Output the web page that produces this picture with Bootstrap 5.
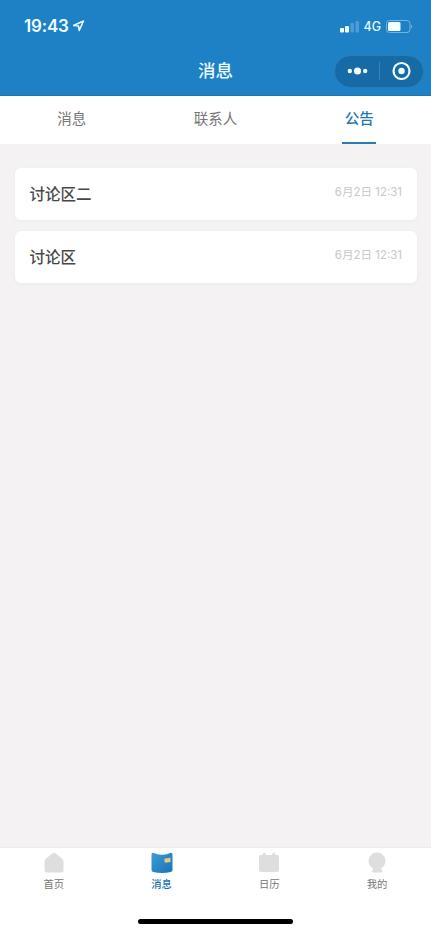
<!DOCTYPE html>
<html lang="zh-CN">
<head>
<meta charset="utf-8">
<meta name="viewport" content="width=device-width, initial-scale=1">
<title>消息</title>
<link href="https://cdn.jsdelivr.net/npm/bootstrap@5.3.0/dist/css/bootstrap.min.css" rel="stylesheet">
<style>
  body { font-family: Inter, "Noto Sans CJK SC", sans-serif; background: #f4f2f3; color: #444; }
  svg { display: block; flex: none; }
  .app { height: 932px; }
  .top { background: #1f81c5; height: 96px; border-bottom: 1px solid #2375ad; }
  .status { height: 52px; padding: 0 18px 0 24px; }
  .clock { font-size: 17px; line-height: 20px; font-weight: 600; letter-spacing: -.2px; color: #f0ffff; }
  .net { font-size: 12.5px; line-height: 16px; color: #e2f7ff; font-weight: 500; padding-top: 1px; margin: 0 5px 0 3px; }
  .titlebar { display: grid; grid-template-columns: 1fr auto 1fr; height: 38px; padding: 0 7.5px; }
  .page-title { font-size: 17.5px; line-height: 24px; font-weight: 500; color: #ecfaff; }
  .capsule { width: 90px; height: 33px; background: #166ba7; border: 1px solid #2c7cb4; }
  .tabs { height: 48px; }
  .tabs .nav-link { height: 48px; padding: 12px 0 0; font-size: 14.5px; line-height: 22px; color: #777; }
  .tabs .nav-link.active { color: #2478b4; font-weight: 500; }
  .tabs .nav-link.active::after { content: ""; display: block; width: 34px; height: 2px; margin: 12px auto 0; background: #2a7cb4; }
  .notices { padding: 24px 14.5px 0; gap: 11px; }
  .notice { height: 52px; padding: 0 14.5px 0 15px; border-radius: 6px; box-shadow: 0 1px 4px rgba(0,0,0,.04); }
  .notice-title { font-size: 15.5px; line-height: 24px; font-weight: 500; color: #484848; padding-top: 15px; }
  .notice-time { font-size: 11.5px; line-height: 18px; color: #c8c8c8; padding-top: 15px; }
  .bottom { height: 85px; border-top: 1px solid #ececec; }
  .bottom .nav-link { padding: 4px 0 0; font-size: 10.3px; line-height: 16px; color: #777; }
  .bottom .nav-link.active { color: #1d74b4; font-weight: 500; }
  .bottom svg { margin-bottom: 2px; }
  .home-bar { width: 155px; height: 5px; margin-bottom: 8px; }
</style>
</head>
<body>
<div class="app d-flex flex-column">
  <header class="top flex-shrink-0">
    <div class="status d-flex align-items-center">
      <span class="clock">19:43</span>
      <svg class="ms-1" width="12" height="12" viewBox="0 0 12 12"><path d="M.500 5.500 10.500 1 6.200 10.500 5.500 6Z" fill="none" stroke="#e6faff" stroke-width="1.600" stroke-linejoin="round"/></svg>
      <svg class="ms-auto" width="20" height="13" viewBox="0 0 20 13"><g fill="#f2ffff"><rect y="8" width="4" height="4.500" rx="1"/><rect x="5" y="6" width="4" height="6.500" rx="1"/></g><g fill="#4b9ed1"><rect x="10.500" y="3" width="3.500" height="9.500" rx="1"/><rect x="15.500" y="1" width="3.500" height="11.500" rx="1"/></g></svg>
      <span class="net">4G</span>
      <svg width="27" height="13" viewBox="0 0 27 13"><rect x=".5" y=".5" width="23.500" height="12" rx="3" fill="none" stroke="#70b5df"/><rect x="2" y="2" width="12.500" height="9" rx="1.500" fill="#f4ffff"/><path d="M25.300 4.500q1.500 2 0 4z" fill="#9ccde9"/></svg>
    </div>
    <div class="titlebar align-items-center">
      <span></span>
      <span class="page-title">消息</span>
      <div class="capsule rounded-pill d-flex align-items-center ms-auto">
        <svg width="88" height="31" viewBox="0 0 88 31"><g fill="#f2ffff"><circle cx="14.800" cy="15" r="2.200"/><circle cx="22.500" cy="15" r="3.600"/><circle cx="30.200" cy="15" r="2.200"/><circle cx="66.500" cy="15" r="3.200"/></g><path d="M44.500 6v18" stroke="#3983b5"/><circle cx="66.500" cy="15" r="8" fill="none" stroke="#f2ffff" stroke-width="2.200"/></svg>
      </div>
    </div>
  </header>

  <nav class="tabs nav nav-justified bg-white flex-shrink-0">
    <a class="nav-link col" href="#">消息</a>
    <a class="nav-link col" href="#">联系人</a>
    <a class="nav-link col active" href="#">公告</a>
  </nav>

  <main class="notices d-flex flex-column flex-grow-1">
    <article class="notice bg-white d-flex justify-content-between">
      <span class="notice-title">讨论区二</span><time class="notice-time">6月2日 12:31</time>
    </article>
    <article class="notice bg-white d-flex justify-content-between">
      <span class="notice-title">讨论区</span><time class="notice-time">6月2日 12:31</time>
    </article>
  </main>

  <footer class="bottom bg-white d-flex flex-column justify-content-between align-items-center flex-shrink-0">
    <nav class="nav nav-justified w-100">
      <a class="nav-link col d-flex flex-column align-items-center" href="#">
        <svg width="22" height="22" viewBox="0 0 22 22"><path d="M9.500 1.300q1.500-1 3 0L19 6.500q1.500 1.300 1.500 3V18q0 2.500-2.500 2.500H4q-2.500 0-2.500-2.500V9.500q0-1.700 1.500-3z" fill="#dedede"/></svg>首页</a>
      <a class="nav-link col active d-flex flex-column align-items-center" href="#">
        <svg width="22" height="22" viewBox="0 0 22 22"><defs><linearGradient id="wallet" x2="1" y2="1"><stop stop-color="#409bd5"/><stop offset="1" stop-color="#1873ba"/></linearGradient></defs><path d="M.5 2.500Q.5.500 2.300.800 7 3 11 2.700 15 3 19.700.800q1.800-.3 1.800 1.700V18q0 1.500-1.700 2-8.800 2-17.600 0Q.5 19.500.5 18z" fill="url(#wallet)"/><path d="M14 6.500l5.500-.8v4.400l-5 .6q-1.200-.2-1.200-2.100 0-1.800.7-2z" fill="#e5c789"/></svg>消息</a>
      <a class="nav-link col d-flex flex-column align-items-center" href="#">
        <svg width="22" height="22" viewBox="0 0 22 22"><path d="M3 3h1.500l.7-1.700q1.100-1.500 2.200 0L8 3h6l.7-1.700q1.100-1.500 2.200 0L17.500 3H19q2 0 2 2v13q0 2-2 2H3q-2 0-2-2V5q0-2 2-2z" fill="#dedede"/></svg>日历</a>
      <a class="nav-link col d-flex flex-column align-items-center" href="#">
        <svg width="22" height="22" viewBox="0 0 22 22"><circle cx="11" cy="9" r="8.500" fill="#dedede"/><path d="M8.300 14.500h5.500l2.500 4.500q.5 1.500-1 1.500H7q-1.500 0-1-1.500z" fill="#dedede"/></svg>我的</a>
    </nav>
    <div class="home-bar bg-black rounded-pill"></div>
  </footer>
</div>
<script src="https://cdn.jsdelivr.net/npm/bootstrap@5.3.0/dist/js/bootstrap.bundle.min.js"></script>
</body>
</html>
